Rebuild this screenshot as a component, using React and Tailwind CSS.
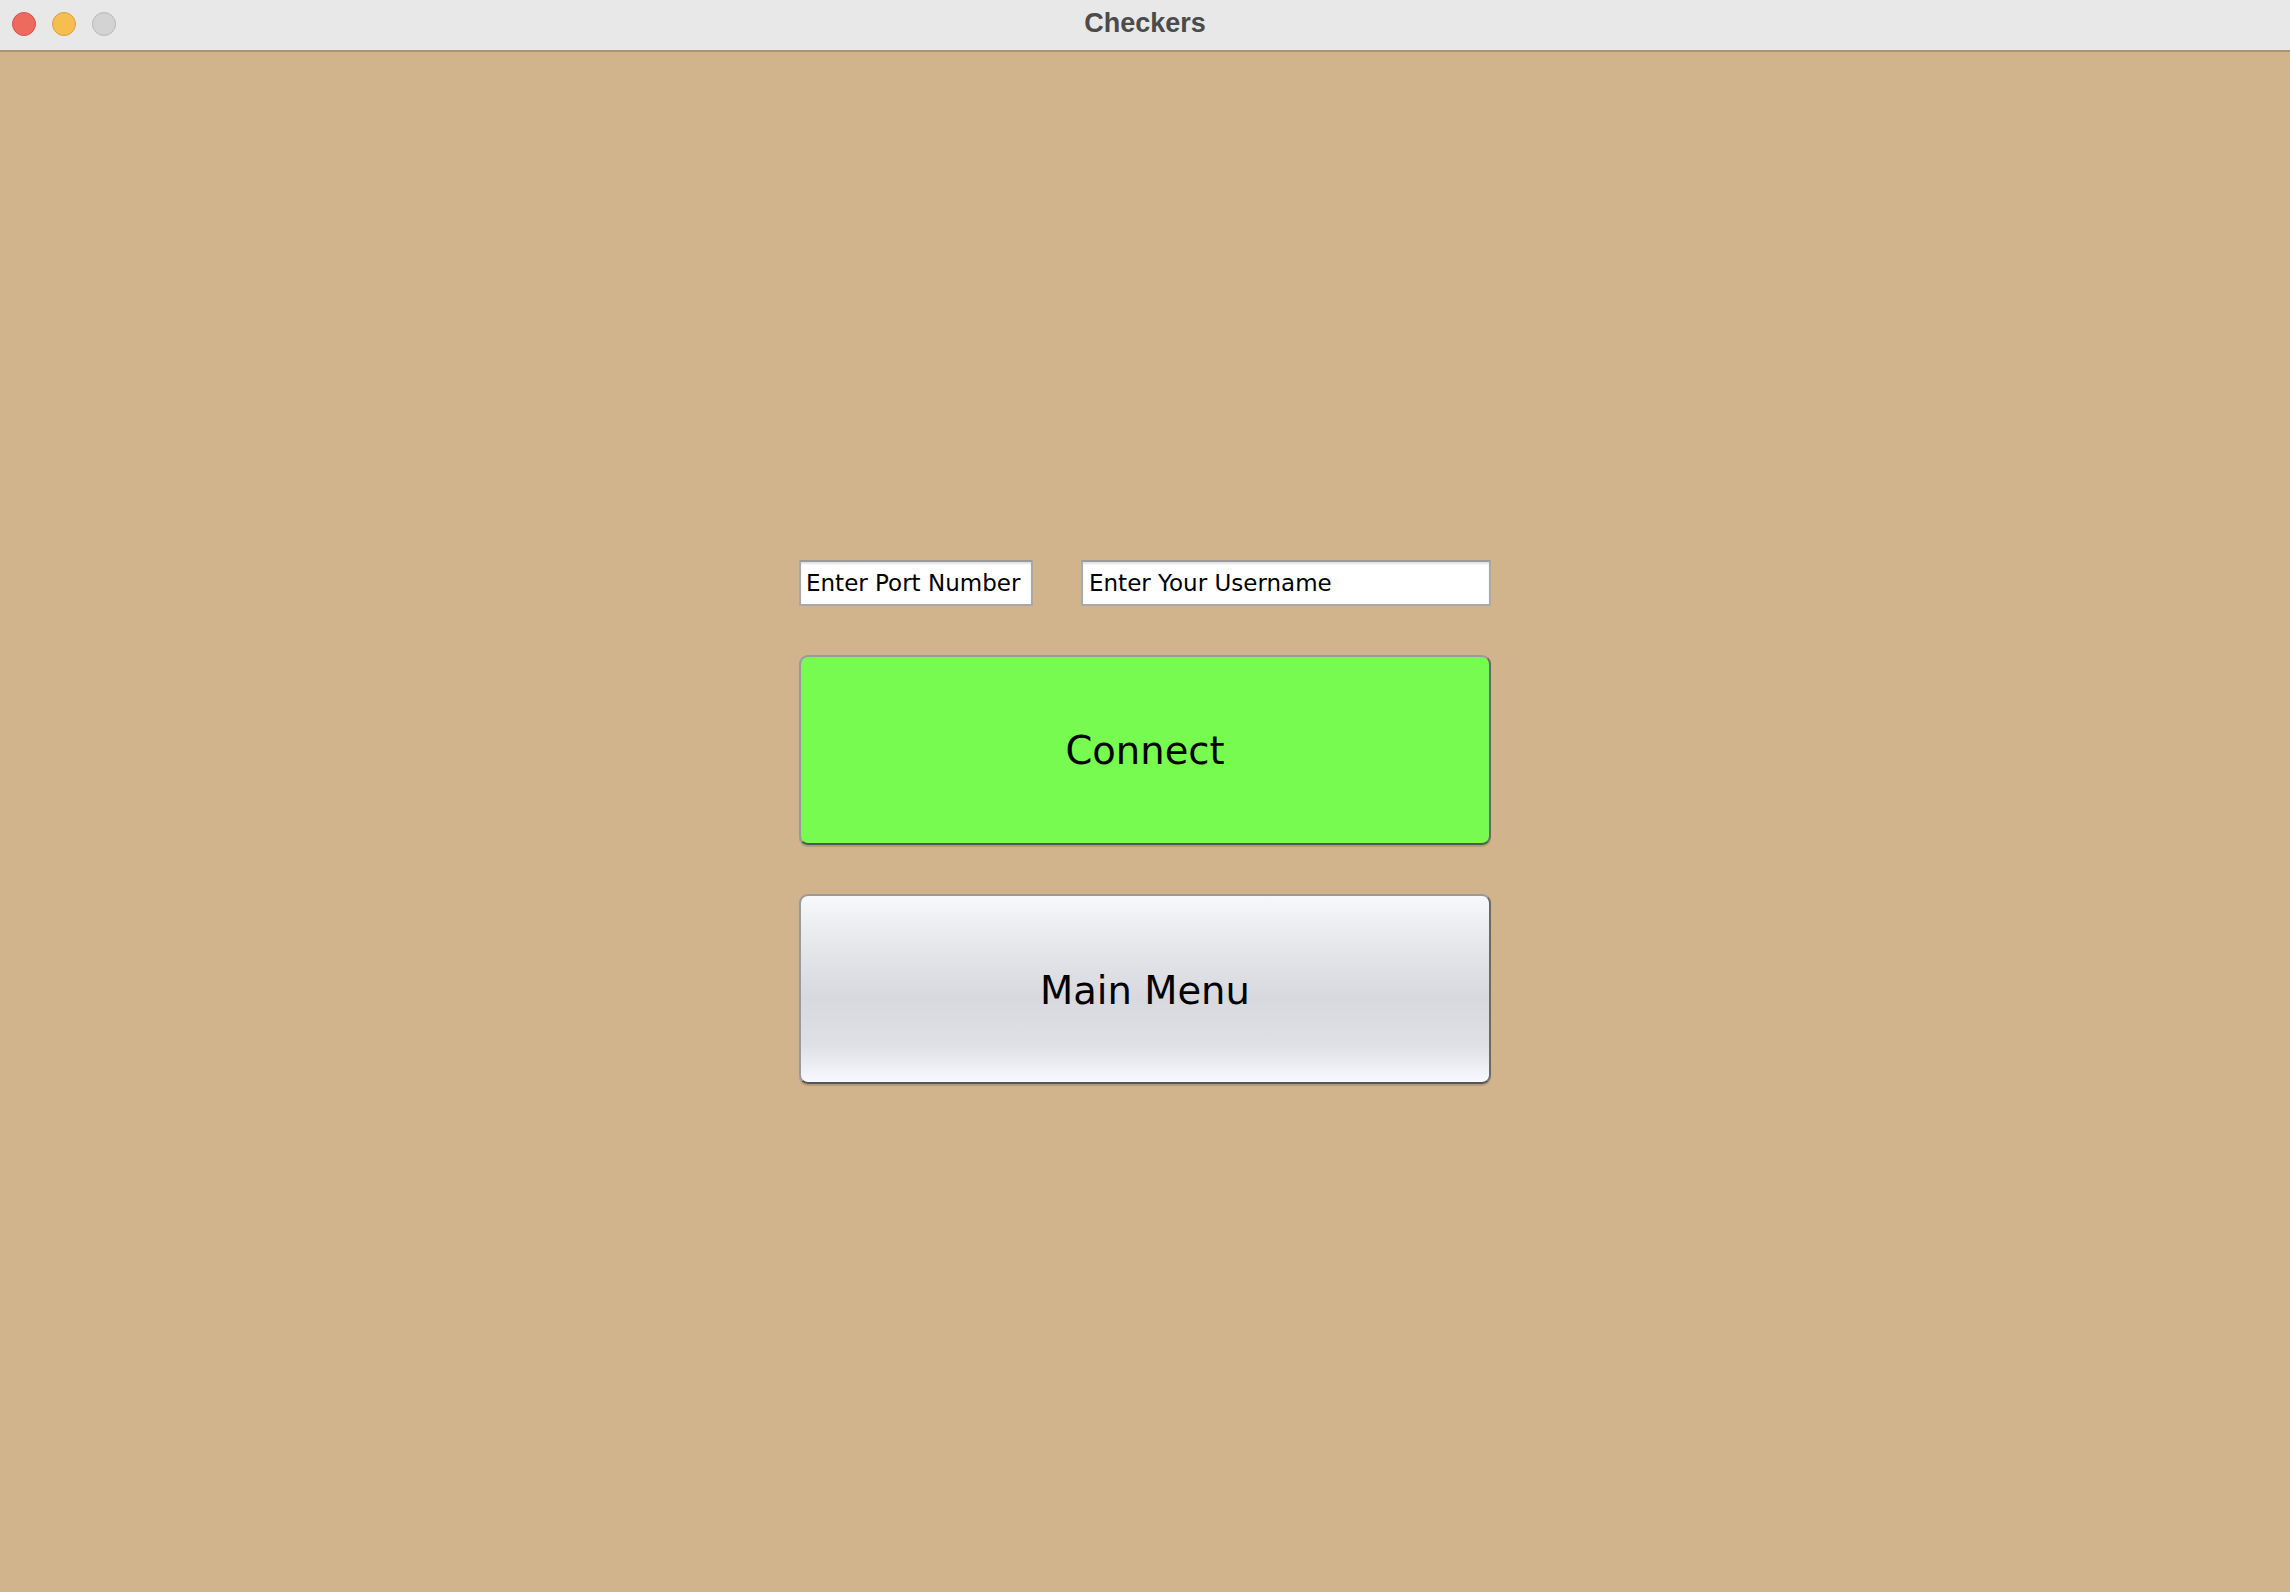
export default function App() {
  return (
    <div className="h-[1592px] w-[2290px] flex flex-col bg-[#d2b48c] overflow-hidden">
      {/* window title bar */}
      <div className="relative h-[52px] shrink-0 bg-[#e8e8e8] border-b-2 border-[#b09270] flex items-center justify-center pb-[4px]">
        <div className="absolute left-[12px] top-[12px] flex gap-[16px]">
          <span className="w-[24px] h-[24px] rounded-full bg-[#ee6a5f] border border-[#d5534a]" />
          <span className="w-[24px] h-[24px] rounded-full bg-[#f5be4f] border border-[#d9a23a]" />
          <span className="w-[24px] h-[24px] rounded-full bg-[#d3d3d3] border border-[#b8b8b8]" />
        </div>
        <span className="font-['Liberation_Sans',sans-serif] font-bold text-[27px] text-[#4b4b4b] leading-none">
          Checkers
        </span>
      </div>

      <div className="flex-1 flex items-center justify-center">
        <div className="w-[692px] flex flex-col gap-[49px] font-['DejaVu_Sans',sans-serif]">
          <div className="flex gap-[48px]">
            <input
              className="w-[234px] h-[46px] bg-white border-2 border-[#a9a9a9] border-t-[#9a9a9a] pl-[5px] pr-0 text-[23px] text-black outline-none shadow-[inset_0_2px_2px_rgba(0,0,0,0.12)]"
              defaultValue="Enter Port Number"
            />
            <input
              className="w-[410px] h-[46px] bg-white border-2 border-[#a9a9a9] border-t-[#9a9a9a] pl-[6px] pr-0 text-[23px] text-black outline-none shadow-[inset_0_2px_2px_rgba(0,0,0,0.12)]"
              defaultValue="Enter Your Username"
            />
          </div>
          <button className="h-[190px] rounded-[9px] bg-[#77fb50] border-2 border-[#9a9a9a] border-b-[#555] border-r-[#6a6a6a] shadow-[0_2px_1px_rgba(0,0,0,0.15)] text-[38.5px] text-black pt-[2px]">
            Connect
          </button>
          <button className="h-[190px] rounded-[9px] bg-[linear-gradient(to_bottom,#f7f8fa_0%,#e4e5e9_30%,#d8d9de_55%,#dfe0e5_80%,#f8f9fe_100%)] border-2 border-[#9a9a9a] border-b-[#555] border-r-[#6a6a6a] shadow-[0_2px_1px_rgba(0,0,0,0.15)] text-[38.5px] text-black pt-[4px]">
            Main Menu
          </button>
        </div>
      </div>
    </div>
  );
}
